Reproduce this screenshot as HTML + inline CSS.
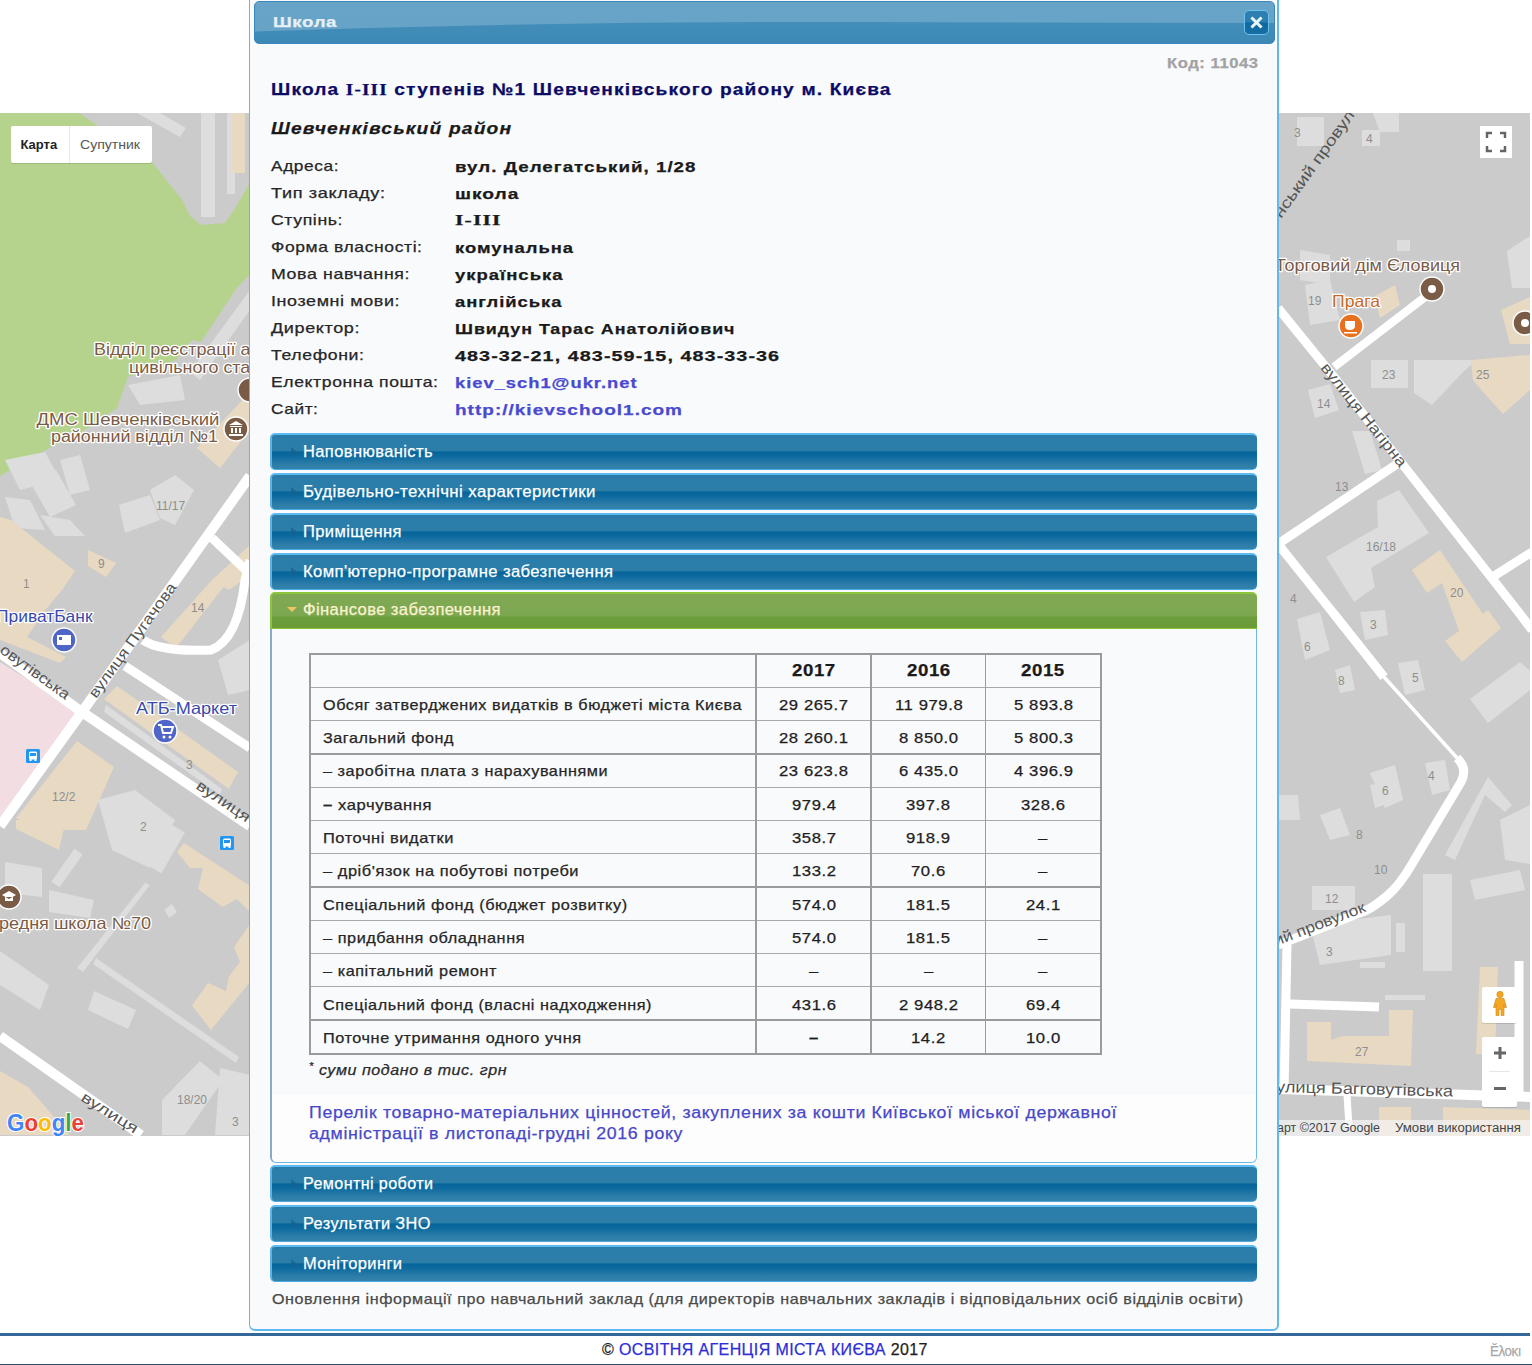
<!DOCTYPE html>
<html><head><meta charset="utf-8">
<style>
*{box-sizing:border-box}
html,body{margin:0;padding:0}
body{width:1532px;height:1365px;position:relative;overflow:hidden;background:#fff;font-family:"Liberation Sans",sans-serif;color:#222}
#map{position:absolute;left:0;top:113px;width:1530px;height:1023px;background:#cbcbcb;overflow:hidden}
#map svg{position:absolute;left:0;top:0}
.t{position:absolute;white-space:nowrap;line-height:1;transform-origin:0 0;-webkit-text-stroke:0.25px currentColor}
.ln{position:absolute}
#dlg{position:absolute;left:249px;top:-6px;width:1030px;height:1337px;border:1px solid #60b8ee;border-right-width:2px;border-bottom-width:2px;border-radius:6px;background:#f9fafc}
#tbar{position:absolute;left:254px;top:1px;width:1021px;height:43px;border-radius:5px;border:1px solid #3a85bb;overflow:hidden;
 background:linear-gradient(180deg,#4792bd 0%,#3d89b5 100%)}
#tbar svg{position:absolute;left:0;top:0}
#close{position:absolute;left:1244px;top:10px;width:25px;height:25px;border-radius:5px;border:1px solid #6ec2ef;background:linear-gradient(180deg,#2d80b0 0%,#2b7eaf 48%,#0e69a0 52%,#176fa4 100%)}
#close svg{position:absolute;left:5px;top:5px}
.acc{position:absolute;left:270px;width:987px;height:37px;border-radius:5px;border-top:2px solid #5cbcf2;border-left:2px solid #5ab4ea;border-bottom:1px solid #4aa8e0;
 background:linear-gradient(180deg,#2a7aa8 0%,#2b7daa 10%,#2c7ea9 46%,#05659a 50%,#0d6a9f 62%,#2b7ca8 85%,#3383ad 100%)}
.acc i{position:absolute;left:19px;top:12px;width:0;height:0;border-top:5px solid transparent;border-bottom:5px solid transparent;border-left:6px solid #1b5f8c;opacity:.7}
#accg{position:absolute;left:270px;top:592px;width:987px;height:37px;border-radius:5px 5px 0 0;border-top:2px solid #8cc63a;border-left:2px solid #8cc43e;border-bottom:1px solid #8cc43a;
 background:linear-gradient(180deg,#80a954 0%,#7da751 62%,#6c9e3b 70%,#6a9b38 100%)}
#accg i{position:absolute;left:15px;top:13px;width:0;height:0;border-left:5px solid transparent;border-right:5px solid transparent;border-top:5px solid #f0c462}
#panel{position:absolute;left:270px;top:629px;width:987px;height:534px;border:1px solid #6cb9ea;border-left:2px solid #8aaacb;border-top:none;border-radius:0 0 6px 6px;background:#f9fafc}
</style></head><body>
<div id="map">
<svg width="1530" height="1023" viewBox="0 113 1530 1023" font-family="Liberation Sans, sans-serif">
<defs>
<style>
.g{fill:#b5d38d}.lb{fill:#dddddd}.tn{fill:#e8d9c3}.pk{fill:#f2dde3}
.rd{stroke:#fff;fill:none;stroke-linecap:butt;stroke-linejoin:round}
.br{fill:#7a5b45;stroke:#fff;stroke-width:2.5px;paint-order:stroke;stroke-linejoin:round}
.bl{fill:#3949ab;stroke:#fff;stroke-width:2.5px;paint-order:stroke;stroke-linejoin:round}
.st{fill:#555;stroke:#fff;stroke-width:0px}
.nm{fill:#8e8e8e;font-size:12px}
</style>
</defs>
<rect x="0" y="113" width="1530" height="1023" fill="#cbcbcb"/>
<!-- ===== LEFT MAP ===== -->
<!-- green park -->
<polygon class="g" points="0,113 79,113 152,162 183,201 190,216 201,225 225,223 234,210 250,183 250,274 236,289 201,342 192,340 176,360 128,377 117,408 88,428 46,450 0,476"/>
<!-- top-right gray area details -->
<polygon class="lb" points="137,113 160,113 186,128 180,137"/>
<rect class="lb" x="201" y="113" width="14" height="104"/>
<rect class="lb" x="227" y="113" width="8" height="81"/>
<rect class="tn" x="232" y="113" width="13" height="60"/>
<!-- light gray blobs near labels -->
<polygon class="lb" points="250,290 250,310 200,380 190,372"/>
<polygon class="lb" points="128,385 180,375 185,400 140,405"/>
<polygon class="lb" points="5,460 45,452 60,480 20,490"/>
<polygon class="lb" points="30,482 56,470 76,505 50,517"/>
<polygon class="lb" points="60,460 80,455 90,490 70,495"/>
<polygon class="lb" points="5,497 30,500 45,530 15,528"/>
<polygon class="lb" points="40,515 70,520 85,536 55,536"/>
<polygon class="lb" points="119,505 150,495 160,520 125,533"/>
<polygon class="lb" points="150,490 175,475 194,490 175,525 160,518"/>
<!-- tan buildings -->
<polygon class="tn" points="197,448 250,392 250,430 220,468"/>
<polygon class="tn" points="0,517 11,520 75,571 62,590 46,609 27,637 66,657 60,663 0,640"/>
<polygon class="tn" points="0,580 68,580 46,609 0,590"/>
<polygon class="tn" points="88,550 116,563 106,577 88,566"/>
<polygon class="tn" points="161,637 176,648 229,580 212,580"/>
<polygon class="tn" points="212,580 250,545 250,575 229,590"/>
<!-- pink -->
<polygon class="pk" points="0,662 80,712 0,822"/>
<!-- ATB -->
<polygon class="tn" points="104,699 117,686 238,772 229,789"/>
<polygon class="lb" points="106,705 222,789 220,795 104,712"/>
<polygon class="lb" points="218,660 250,640 250,690 228,695"/>
<polygon class="tn" points="16,818 77,741 114,767 86,830 40,830"/>
<polygon class="lb" points="98,800 135,790 175,820 150,868 112,850"/>
<polygon class="tn" points="177,852 184,843 250,886 250,912 237,899 222.6,907 198,889 203,868 190,868"/><polygon class="tn" points="234,947 250,924 250,982 211,1030 192,1005.5 208,983 226,991 229,976.5 240,962"/><polygon class="lb" points="164.5,910 172,904 177,912 169,918"/>
<polygon class="tn" points="16,820 66,820 59,850 16,829"/>
<rect class="lb" x="138" y="820" width="38" height="47" transform="rotate(30 157 843)"/>
<polygon class="lb" points="5,862 42,868 42,897 5,893"/>
<polygon class="lb" points="49,890 94,900 90,918 49,912"/>
<polygon class="lb" points="0,951 49,985 40,1010 0,985"/>
<polygon class="lb" points="94,991 136,1010 128,1029 88,1010"/>
<polygon class="lb" points="162,1100 200,1061 223,1080 185,1135 162,1135"/>
<polygon class="lb" points="220,1068 250,1075 250,1135 215,1135"/>
<polygon class="lb" points="77,968 83,972 150,885 145,883"/>
<rect class="lb" x="62" y="848" width="10" height="40" transform="rotate(35 67 868)"/>
<polygon class="lb" points="96,958 239,1057 236,1063 93,964"/>
<polygon class="tn" points="0,1071 28,1087 70,1135 0,1135"/>
<!-- roads -->
<polyline class="rd" stroke-width="10" points="250,476 176,580 82,712 0,826"/>
<polyline class="rd" stroke-width="9" points="212,538 250,574"/>
<path class="rd" stroke-width="9" d="M143,640 Q160,652 211,650 Q238,640 245,580 L250,560"/>
<polyline class="rd" stroke-width="10" points="0,653 82,712 250,826"/>
<polyline class="rd" stroke-width="9" points="125,666 250,748"/>
<polyline class="rd" stroke-width="10" points="0,1036 141,1135"/>
<!-- left labels -->
<text class="br" font-size="16" transform="translate(94,355) scale(1.12,1)">Відділ реєстрації актів</text>
<text class="br" font-size="16" transform="translate(129,373) scale(1.12,1)">цивільного стану</text>
<text class="br" x="36.5" y="425" font-size="16" textLength="183" lengthAdjust="spacingAndGlyphs">ДМС Шевченківський</text>
<text class="br" x="51" y="442" font-size="16" textLength="167" lengthAdjust="spacingAndGlyphs">районний відділ №1</text>
<circle cx="236" cy="429" r="12" fill="#7a5b45" stroke="#fff" stroke-width="1.5"/>
<path d="M229,425 L236,421 L243,425 Z M230,426h12v1h-12z M231,428h2v5h-2z M235,428h2v5h-2z M239,428h2v5h-2z M229,434h14v2h-14z" fill="#fff"/>
<circle cx="250" cy="390" r="12" fill="#7a5b45" stroke="#fff" stroke-width="1.5"/>
<text class="nm" x="156" y="510">11/17</text>
<text class="nm" x="98" y="568">9</text>
<text class="nm" x="23" y="588">1</text>
<text class="nm" x="191" y="612">14</text>
<text class="nm" x="186" y="769">3</text>
<text class="nm" x="52" y="801">12/2</text>
<text class="nm" x="140" y="831">2</text>
<text class="nm" x="177" y="1104">18/20</text>
<text class="nm" x="232" y="1126">3</text>
<text class="bl" x="-4" y="622" font-size="16.5" textLength="96.5" lengthAdjust="spacingAndGlyphs">ПриватБанк</text>
<circle cx="64" cy="640" r="12" fill="#5065c8" stroke="#fff" stroke-width="1.5"/>
<rect x="57" y="635" width="14" height="10" fill="#fff"/><rect x="59" y="637" width="3" height="3" fill="#5065c8"/>
<text class="bl" x="136" y="714" font-size="16.5" textLength="101" lengthAdjust="spacingAndGlyphs">АТБ-Маркет</text>
<circle cx="165" cy="731" r="12" fill="#5065c8" stroke="#fff" stroke-width="1.5"/>
<path d="M158,725h3l2,8h8l2,-6h-11" stroke="#fff" stroke-width="2" fill="none"/><circle cx="164" cy="737" r="1.5" fill="#fff"/><circle cx="170" cy="737" r="1.5" fill="#fff"/>
<rect x="26" y="749" width="14" height="14" rx="1.5" fill="#2196f3"/><rect x="29" y="751.5" width="8" height="8" rx="1.5" fill="#fff"/><rect x="30" y="753" width="6" height="3" fill="#2196f3"/><rect x="29.5" y="759" width="2" height="2" fill="#fff"/><rect x="34.5" y="759" width="2" height="2" fill="#fff"/>
<rect x="220" y="836" width="14" height="14" rx="1.5" fill="#2196f3"/><rect x="223" y="838.5" width="8" height="8" rx="1.5" fill="#fff"/><rect x="224" y="840" width="6" height="3" fill="#2196f3"/><rect x="223.5" y="846" width="2" height="2" fill="#fff"/><rect x="228.5" y="846" width="2" height="2" fill="#fff"/>
<text fill="#555" font-size="15" textLength="138" lengthAdjust="spacingAndGlyphs" transform="translate(96,699) rotate(-54)">вулиця Пугачова</text>
<text fill="#555" font-size="15" textLength="82" lengthAdjust="spacingAndGlyphs" transform="translate(-1,652) rotate(36)">овутівська</text>
<text fill="#555" font-size="15" textLength="62" lengthAdjust="spacingAndGlyphs" transform="translate(195,788) rotate(34)">вулиця</text>
<text fill="#555" font-size="15" textLength="64" lengthAdjust="spacingAndGlyphs" transform="translate(80,1100) rotate(32)">вулиця</text>
<circle cx="9" cy="897" r="12" fill="#7a5b45" stroke="#fff" stroke-width="1.5"/>
<path d="M2,895 L9,891 L16,895 L9,899Z M5,897v4h8v-4" fill="#fff"/>
<text class="br" x="-1" y="929" font-size="16.5" textLength="152" lengthAdjust="spacingAndGlyphs">редня школа №70</text>
<!-- Google logo -->
<g font-size="23" font-weight="bold" stroke="#fff" stroke-width="2" paint-order="stroke">
<text x="7" y="1131" fill="#4285f4" textLength="77" lengthAdjust="spacingAndGlyphs">G<tspan fill="#ea4335">o</tspan><tspan fill="#fbbc05">o</tspan><tspan fill="#4285f4">g</tspan><tspan fill="#34a853">l</tspan><tspan fill="#ea4335">e</tspan></text>
</g>
<!-- map type control -->
<rect x="11" y="127" width="141" height="37" fill="rgba(0,0,0,0.12)" rx="2"/>
<rect x="11" y="126" width="141" height="37" fill="#fff" rx="2"/>
<line x1="69.5" y1="126" x2="69.5" y2="163" stroke="#e6e6e6"/>
<text x="20.5" y="149" font-size="13" font-weight="bold" fill="#222">Карта</text>
<text x="80" y="149" font-size="13" fill="#565656" textLength="60" lengthAdjust="spacingAndGlyphs">Супутник</text>

<!-- ===== RIGHT MAP ===== -->
<polygon class="lb" points="1297,117 1324,117 1324,146 1297,146"/>
<polygon class="lb" points="1362,130 1380,130 1380,146 1362,146"/>
<polygon class="lb" points="1373,113 1399,113 1399,132 1380,132"/>
<polygon class="lb" points="1397,240 1410,240 1410,251 1397,251"/>
<polygon class="lb" points="1507,251 1530,236 1530,288 1512,288"/>
<polygon class="lb" points="1300,250 1330,255 1330,285 1300,280"/>
<polygon class="lb" points="1305,285 1330,280 1340,320 1310,325"/>
<polygon class="tn" points="1375,296 1395,285 1400,305 1380,318"/>
<polygon class="tn" points="1501,310 1530,297 1530,344 1510,344"/>
<!-- Нагірна area -->
<polygon class="lb" points="1371,360 1408,360 1408,388 1371,388"/>
<polygon class="lb" points="1414,360 1477,360 1464,371 1432,405 1414,393"/>
<polygon class="tn" points="1471,360 1530,355 1530,390 1503,414 1483,392 1473,380"/>
<polygon class="lb" points="1308,390 1330,384 1339,410 1315,418"/>
<polygon class="lb" points="1352,431 1370,431 1382,470 1365,474"/>
<polygon class="lb" points="1326,557 1378,527 1377,501 1399,490 1429,533 1371,568 1375,587 1354,602"/>
<polygon class="tn" points="1412,570 1440,550 1483,614 1453,614 1442,583 1427,593"/><polygon class="tn" points="1453,614 1483,614 1490,625 1462,640"/>
<polygon class="tn" points="1445,641 1488,610 1501,628 1462,662"/>
<polygon class="lb" points="1470,699 1520,662 1530,671 1530,690 1488,723"/>
<polygon class="lb" points="1297,619 1320,612 1330,650 1305,660"/>
<polygon class="lb" points="1360,612 1385,610 1388,635 1365,640"/>
<polygon class="lb" points="1398,663 1418,660 1425,690 1405,695"/>
<polygon class="lb" points="1335,670 1350,665 1355,690 1340,693"/>
<polygon class="lb" points="1370,773 1395,765 1403,800 1385,808"/>
<polygon class="lb" points="1425,763 1445,760 1450,790 1432,795"/>
<polygon class="lb" points="1370,785 1390,780 1398,800 1375,808"/>
<polygon class="lb" points="1320,815 1340,808 1350,835 1330,840"/>
<polygon class="lb" points="1278,795 1298,795 1300,820 1278,820"/>
<polygon class="lb" points="1445,855 1488,777 1512,805 1505,812 1485,795 1455,860"/>
<polygon class="lb" points="1500,820 1530,805 1530,864 1505,860"/>
<polygon class="lb" points="1423,874 1452,874 1452,971 1423,971"/>
<polygon class="lb" points="1312,886 1355,886 1355,910 1312,910"/>
<polygon class="lb" points="1310,925 1391,915 1391,955 1320,965"/>
<polygon class="lb" points="1396,923 1405,923 1405,952 1396,952"/>
<polygon class="lb" points="1360,962 1385,962 1385,968 1360,968"/>
<polygon class="lb" points="1385,995 1425,995 1425,1000 1385,1000"/>
<polygon class="lb" points="1470,880 1520,870 1525,890 1475,900"/>
<polygon class="tn" points="1307,1022 1331,1022 1331,1040 1343,1036 1389,1036 1389,1010 1413,1010 1411,1066 1307,1061"/>
<polygon class="tn" points="1480,967 1498,967 1495,1054 1476,1054"/>
<polygon class="tn" points="1379,1107 1411,1107 1411,1136 1379,1136"/>
<polygon class="tn" points="1443,1107 1530,1110 1530,1136 1443,1136"/>
<!-- right roads -->
<polyline class="rd" stroke-width="9" points="1278,308 1334,377 1520,614 1532,630"/>
<polyline class="rd" stroke-width="8.5" points="1425,297 1334,367"/>
<polyline class="rd" stroke-width="9" points="1278,544 1397,464"/>
<polyline class="rd" stroke-width="9" points="1278,544 1334,614 1384,677"/>
<polyline class="rd" stroke-width="9" points="1494,576 1532,552"/>


<path class="rd" stroke-width="9" d="M1334,614 L1384,677"/><path class="rd" stroke-width="3.5" d="M1384,677 L1458,759"/><path class="rd" stroke-width="9" d="M1457,758 Q1468,768 1461,782 L1412,864 Q1400,885 1387,896 Q1375,906 1367,910 L1278,945"/>
<polyline class="rd" stroke-width="9" points="1287,945 1284,1093"/>
<polyline class="rd" stroke-width="9" points="1290,1004 1379,1007"/>
<polyline class="rd" stroke-width="10" points="1278,1089 1532,1097"/>
<polyline class="rd" stroke-width="9" points="1519,961 1519,1093"/>
<polyline class="rd" stroke-width="7" points="1347,1095 1349,1127"/>
<!-- right labels -->
<text fill="#555" font-size="15.5" textLength="128" lengthAdjust="spacingAndGlyphs" transform="translate(1281,219) rotate(-54.5)">нський провул</text>
<text class="br" x="1275" y="271" font-size="16.5" textLength="185" lengthAdjust="spacingAndGlyphs">Торговий дім Єловиця</text>
<circle cx="1432" cy="289" r="12" fill="#7a5b45" stroke="#fff" stroke-width="1.5"/><circle cx="1432" cy="289" r="4" fill="#fff"/>
<circle cx="1525" cy="323" r="12" fill="#7a5b45" stroke="#fff" stroke-width="1.5"/><circle cx="1525" cy="323" r="4" fill="#fff"/>
<text x="1332" y="307" font-size="16.5" textLength="48" lengthAdjust="spacingAndGlyphs" fill="#c26a25" stroke="#fff" stroke-width="2.5" paint-order="stroke">Прага</text>
<circle cx="1351" cy="326" r="12" fill="#e8711f" stroke="#fff" stroke-width="1.5"/>
<path d="M1345,321h10v5q0,4 -5,4q-5,0 -5,-4z M1344,332h13v1.5h-13z" fill="#fff"/>
<text class="nm" x="1308" y="305">19</text>
<text class="nm" x="1294" y="137">3</text>
<text class="nm" x="1366" y="143">4</text>
<text class="nm" x="1382" y="379">23</text>
<text class="nm" x="1476" y="379">25</text>
<text class="nm" x="1317" y="408">14</text>
<text class="nm" x="1335" y="491">13</text>
<text class="nm" x="1366" y="551">16/18</text>
<text class="nm" x="1450" y="597">20</text>
<text class="nm" x="1290" y="603">4</text>
<text class="nm" x="1370" y="629">3</text>
<text class="nm" x="1304" y="651">6</text>
<text class="nm" x="1338" y="685">8</text>
<text class="nm" x="1412" y="682">5</text>
<text class="nm" x="1428" y="780">4</text>
<text class="nm" x="1382" y="795">6</text>
<text class="nm" x="1356" y="839">8</text>
<text class="nm" x="1374" y="874">10</text>
<text class="nm" x="1325" y="903">12</text>
<text class="nm" x="1326" y="956">3</text>
<text class="nm" x="1355" y="1056">27</text>
<text fill="#555" font-size="15.5" textLength="128" lengthAdjust="spacingAndGlyphs" transform="translate(1320,368) rotate(51.5)">вулиця Нагірна</text>
<text fill="#555" font-size="15.5" textLength="97" lengthAdjust="spacingAndGlyphs" transform="translate(1276,946) rotate(-21)">ий провулок</text>
<text fill="#555" font-size="16" textLength="177" lengthAdjust="spacingAndGlyphs" transform="translate(1276,1092) rotate(1.5)">улиця Багговутівська</text>
<!-- controls -->
<rect x="1480" y="126" width="32" height="32" fill="#fff"/>
<path d="M1487,138v-5h5 M1500,133h5v5 M1505,146v5h-5 M1492,151h-5v-5" stroke="#666" stroke-width="2.5" fill="none"/>
<rect x="1482" y="988" width="35" height="36" fill="rgba(0,0,0,.12)" rx="2"/>
<rect x="1482" y="987" width="35" height="36" fill="#fff" rx="2"/>
<circle cx="1500" cy="994.5" r="3.2" fill="#f5a623" stroke="#c98a10" stroke-width=".6"/>
<path d="M1496,998.5h8l2.5,9h-2l-0.5,-3v11h-3v-6h-2v6h-3v-11l-0.5,3h-2z" fill="#f5a623" stroke="#c98a10" stroke-width=".6"/>
<rect x="1482" y="1038" width="35" height="70" fill="rgba(0,0,0,.12)" rx="2"/>
<rect x="1482" y="1037" width="35" height="70" fill="#fff" rx="2"/>
<line x1="1489" y1="1071.5" x2="1510" y2="1071.5" stroke="#e6e6e6"/>
<path d="M1494,1053h12 M1500,1047v12" stroke="#666" stroke-width="3"/>
<path d="M1494,1088.5h12" stroke="#666" stroke-width="3"/>
<rect x="1278" y="1120" width="252" height="16" fill="rgba(245,245,245,0.7)"/>
<text x="1277" y="1132" font-size="12.5" fill="#444" textLength="103" lengthAdjust="spacingAndGlyphs">арт ©2017 Google</text>
<text x="1395" y="1132" font-size="12.5" fill="#444" textLength="126" lengthAdjust="spacingAndGlyphs">Умови використання</text>
</svg>

</div>
<div id="dlg"></div>
<div id="tbar"><svg width="1021" height="43"><defs><linearGradient id="tg" x1="0" y1="0" x2="0" y2="1"><stop offset="0" stop-color="#68a4c8"/><stop offset="1" stop-color="#67a3c6"/></linearGradient></defs><path d="M0,0H1021V21L600,20Q300,19 0,29.5Z" fill="url(#tg)"/></svg></div>
<div id="close"><svg width="13" height="13" viewBox="0 0 13 13"><path d="M2.5 2.5L10.5 10.5M10.5 2.5L2.5 10.5" stroke="#e8f6fc" stroke-width="3" stroke-linecap="square"/></svg></div>
<div class="acc" style="top:433px"><i></i></div>
<div class="acc" style="top:473px"><i></i></div>
<div class="acc" style="top:513px"><i></i></div>
<div class="acc" style="top:553px"><i></i></div>
<div id="accg"><i></i></div>
<div id="panel"></div>
<div class="ln" style="left:272px;top:1095px;width:984px;height:67px;background:#fdfdfe;border-radius:0 0 5px 5px"></div>
<div class="ln" style="left:309px;top:687px;width:792px;height:1px;background:#a9a9a9"></div>
<div class="ln" style="left:309px;top:720px;width:792px;height:1px;background:#a9a9a9"></div>
<div class="ln" style="left:309px;top:753px;width:792px;height:2px;background:#9a9a9a"></div>
<div class="ln" style="left:309px;top:787px;width:792px;height:1px;background:#a9a9a9"></div>
<div class="ln" style="left:309px;top:820px;width:792px;height:1px;background:#a9a9a9"></div>
<div class="ln" style="left:309px;top:853px;width:792px;height:1px;background:#a9a9a9"></div>
<div class="ln" style="left:309px;top:886px;width:792px;height:2px;background:#9a9a9a"></div>
<div class="ln" style="left:309px;top:920px;width:792px;height:1px;background:#a9a9a9"></div>
<div class="ln" style="left:309px;top:953px;width:792px;height:1px;background:#a9a9a9"></div>
<div class="ln" style="left:309px;top:986px;width:792px;height:1px;background:#a9a9a9"></div>
<div class="ln" style="left:309px;top:1019px;width:792px;height:2px;background:#9a9a9a"></div>
<div class="ln" style="left:309px;top:653px;width:2px;height:401px;background:#9c9c9c"></div>
<div class="ln" style="left:755px;top:653px;width:2px;height:401px;background:#9c9c9c"></div>
<div class="ln" style="left:870px;top:653px;width:2px;height:401px;background:#9c9c9c"></div>
<div class="ln" style="left:985px;top:653px;width:1px;height:401px;background:#9c9c9c"></div>
<div class="ln" style="left:1100px;top:653px;width:2px;height:401px;background:#9c9c9c"></div>
<div class="ln" style="left:309px;top:653px;width:793px;height:2px;background:#9a9a9a"></div>
<div class="ln" style="left:309px;top:1053px;width:793px;height:2px;background:#9a9a9a"></div>
<div class="acc" style="top:1165px"><i></i></div>
<div class="acc" style="top:1205px"><i></i></div>
<div class="acc" style="top:1245px"><i></i></div>
<div class="ln" style="left:0;top:1333px;width:1530px;height:3px;background:#35689a"></div>
<div class="t" style="left:1490px;top:1344px;font-size:14px;color:#a8a8a8;letter-spacing:-0.5px;transform:scaleX(0.95)">Ĕλoĸı</div>
<div class="ln" style="left:0;top:1364px;width:1532px;height:1px;background:#2f4f6f"></div>
<div class="t" style="left:272.5px;top:13.8px;color:#e6f0f6;font-size:15px;font-weight:bold;font-style:normal;letter-spacing:0.5px;transform:scaleX(1.2440)">Школа</div>
<div class="t" style="left:1167.3px;top:55.3px;color:#a2a2a2;font-size:15px;font-weight:bold;font-style:normal;letter-spacing:0.5px;transform:scaleX(1.1070)">Код: 11043</div>
<div class="t" style="left:271.0px;top:80.8px;color:#0b0b66;font-size:16.5px;font-weight:bold;font-style:normal;letter-spacing:1.0px;transform:scaleX(1.1599)">Школа <span style="font-family:Liberation Serif">I-III</span> ступенів №1 Шевченківського району м. Києва</div>
<div class="t" style="left:271.0px;top:120.2px;color:#1a1a1a;font-size:17px;font-weight:bold;font-style:italic;letter-spacing:1.0px;transform:scaleX(1.1332)">Шевченківський район</div>
<div class="t" style="left:270.9px;top:159.3px;color:#262626;font-size:14.5px;font-weight:normal;font-style:normal;letter-spacing:0.5px;transform:scaleX(1.1924)">Адреса:</div>
<div class="t" style="left:454.6px;top:158.9px;color:#1a1a1a;font-size:15px;font-weight:bold;font-style:normal;letter-spacing:0.8px;transform:scaleX(1.2518)">вул. Делегатський, 1/28</div>
<div class="t" style="left:270.9px;top:186.3px;color:#262626;font-size:14.5px;font-weight:normal;font-style:normal;letter-spacing:0.5px;transform:scaleX(1.2502)">Тип закладу:</div>
<div class="t" style="left:454.6px;top:185.9px;color:#1a1a1a;font-size:15px;font-weight:bold;font-style:normal;letter-spacing:0.8px;transform:scaleX(1.2781)">школа</div>
<div class="t" style="left:270.9px;top:213.3px;color:#262626;font-size:14.5px;font-weight:normal;font-style:normal;letter-spacing:0.5px;transform:scaleX(1.2180)">Ступінь:</div>
<div class="t" style="left:454.6px;top:212.9px;color:#1a1a1a;font-family:Liberation Serif,serif;font-size:15px;font-weight:bold;font-style:normal;letter-spacing:0.8px;transform:scaleX(1.4417)">I-III</div>
<div class="t" style="left:270.9px;top:240.3px;color:#262626;font-size:14.5px;font-weight:normal;font-style:normal;letter-spacing:0.5px;transform:scaleX(1.2072)">Форма власності:</div>
<div class="t" style="left:454.6px;top:239.9px;color:#1a1a1a;font-size:15px;font-weight:bold;font-style:normal;letter-spacing:0.8px;transform:scaleX(1.2256)">комунальна</div>
<div class="t" style="left:270.9px;top:267.3px;color:#262626;font-size:14.5px;font-weight:normal;font-style:normal;letter-spacing:0.5px;transform:scaleX(1.2248)">Мова навчання:</div>
<div class="t" style="left:454.6px;top:266.9px;color:#1a1a1a;font-size:15px;font-weight:bold;font-style:normal;letter-spacing:0.8px;transform:scaleX(1.2321)">українська</div>
<div class="t" style="left:270.9px;top:294.3px;color:#262626;font-size:14.5px;font-weight:normal;font-style:normal;letter-spacing:0.5px;transform:scaleX(1.2346)">Іноземні мови:</div>
<div class="t" style="left:454.6px;top:293.9px;color:#1a1a1a;font-size:15px;font-weight:bold;font-style:normal;letter-spacing:0.8px;transform:scaleX(1.2268)">англійська</div>
<div class="t" style="left:270.9px;top:321.3px;color:#262626;font-size:14.5px;font-weight:normal;font-style:normal;letter-spacing:0.5px;transform:scaleX(1.2429)">Директор:</div>
<div class="t" style="left:454.6px;top:320.9px;color:#1a1a1a;font-size:15px;font-weight:bold;font-style:normal;letter-spacing:0.8px;transform:scaleX(1.1917)">Швидун Тарас Анатолійович</div>
<div class="t" style="left:270.9px;top:348.3px;color:#262626;font-size:14.5px;font-weight:normal;font-style:normal;letter-spacing:0.5px;transform:scaleX(1.2192)">Телефони:</div>
<div class="t" style="left:454.6px;top:347.9px;color:#1a1a1a;font-size:15px;font-weight:bold;font-style:normal;letter-spacing:0.8px;transform:scaleX(1.3183)">483-32-21, 483-59-15, 483-33-36</div>
<div class="t" style="left:270.9px;top:375.3px;color:#262626;font-size:14.5px;font-weight:normal;font-style:normal;letter-spacing:0.5px;transform:scaleX(1.2128)">Електронна пошта:</div>
<div class="t" style="left:454.6px;top:374.9px;color:#4a4ad0;font-size:15px;font-weight:bold;font-style:normal;letter-spacing:0.8px;transform:scaleX(1.2235)">kiev_sch1@ukr.net</div>
<div class="t" style="left:270.9px;top:402.3px;color:#262626;font-size:14.5px;font-weight:normal;font-style:normal;letter-spacing:0.5px;transform:scaleX(1.1883)">Сайт:</div>
<div class="t" style="left:454.6px;top:401.9px;color:#4a4ad0;font-size:15px;font-weight:bold;font-style:normal;letter-spacing:0.8px;transform:scaleX(1.2657)">http://kievschool1.com</div>
<div class="t" style="left:302.5px;top:444.1px;color:#ffffff;font-size:16px;font-weight:normal;font-style:normal;letter-spacing:0.4px;transform:scaleX(1.0291)">Наповнюваність</div>
<div class="t" style="left:302.5px;top:484.1px;color:#ffffff;font-size:16px;font-weight:normal;font-style:normal;letter-spacing:0.4px;transform:scaleX(1.0515)">Будівельно-технічні характеристики</div>
<div class="t" style="left:302.5px;top:524.1px;color:#ffffff;font-size:16px;font-weight:normal;font-style:normal;letter-spacing:0.4px;transform:scaleX(1.0292)">Приміщення</div>
<div class="t" style="left:302.5px;top:564.1px;color:#ffffff;font-size:16px;font-weight:normal;font-style:normal;letter-spacing:0.4px;transform:scaleX(1.0376)">Комп'ютерно-програмне забезпечення</div>
<div class="t" style="left:302.5px;top:602.3px;color:#fbf3d0;font-size:16px;font-weight:normal;font-style:normal;letter-spacing:0.4px;transform:scaleX(1.0332)">Фінансове забезпечення</div>
<div class="t" style="left:302.5px;top:1176.1px;color:#ffffff;font-size:16px;font-weight:normal;font-style:normal;letter-spacing:0.4px;transform:scaleX(1.0066)">Ремонтні роботи</div>
<div class="t" style="left:302.5px;top:1216.1px;color:#ffffff;font-size:16px;font-weight:normal;font-style:normal;letter-spacing:0.4px;transform:scaleX(1.0198)">Результати ЗНО</div>
<div class="t" style="left:302.5px;top:1256.1px;color:#ffffff;font-size:16px;font-weight:normal;font-style:normal;letter-spacing:0.4px;transform:scaleX(1.0280)">Моніторинги</div>
<div class="t" style="left:791.9px;top:662.5px;color:#1a1a1a;font-size:16px;font-weight:bold;font-style:normal;letter-spacing:0.5px;transform:scaleX(1.1646)">2017</div>
<div class="t" style="left:906.7px;top:662.5px;color:#1a1a1a;font-size:16px;font-weight:bold;font-style:normal;letter-spacing:0.5px;transform:scaleX(1.1646)">2016</div>
<div class="t" style="left:1021.4px;top:662.5px;color:#1a1a1a;font-size:16px;font-weight:bold;font-style:normal;letter-spacing:0.5px;transform:scaleX(1.1646)">2015</div>
<div class="t" style="left:323.2px;top:697.5px;color:#262626;font-size:14.5px;font-weight:normal;font-style:normal;letter-spacing:0.5px;transform:scaleX(1.1173)">Обсяг затверджених видатків в бюджеті міста Києва</div>
<div class="t" style="left:779.0px;top:697.5px;color:#1e1e1e;font-size:14.5px;font-weight:normal;font-style:normal;letter-spacing:0.5px;transform:scaleX(1.1497)">29 265.7</div>
<div class="t" style="left:894.5px;top:697.5px;color:#1e1e1e;font-size:14.5px;font-weight:normal;font-style:normal;letter-spacing:0.5px;transform:scaleX(1.1497)">11 979.8</div>
<div class="t" style="left:1013.5px;top:697.5px;color:#1e1e1e;font-size:14.5px;font-weight:normal;font-style:normal;letter-spacing:0.5px;transform:scaleX(1.1497)">5 893.8</div>
<div class="t" style="left:323.2px;top:730.9px;color:#262626;font-size:14.5px;font-weight:normal;font-style:normal;letter-spacing:0.5px;transform:scaleX(1.1146)">Загальний фонд</div>
<div class="t" style="left:779.0px;top:730.9px;color:#1e1e1e;font-size:14.5px;font-weight:normal;font-style:normal;letter-spacing:0.5px;transform:scaleX(1.1497)">28 260.1</div>
<div class="t" style="left:898.8px;top:730.9px;color:#1e1e1e;font-size:14.5px;font-weight:normal;font-style:normal;letter-spacing:0.5px;transform:scaleX(1.1497)">8 850.0</div>
<div class="t" style="left:1013.5px;top:730.9px;color:#1e1e1e;font-size:14.5px;font-weight:normal;font-style:normal;letter-spacing:0.5px;transform:scaleX(1.1497)">5 800.3</div>
<div class="t" style="left:323.2px;top:764.2px;color:#262626;font-size:14.5px;font-weight:normal;font-style:normal;letter-spacing:0.5px;transform:scaleX(1.1168)">– заробітна плата з нарахуваннями</div>
<div class="t" style="left:779.0px;top:764.2px;color:#1e1e1e;font-size:14.5px;font-weight:normal;font-style:normal;letter-spacing:0.5px;transform:scaleX(1.1497)">23 623.8</div>
<div class="t" style="left:898.8px;top:764.2px;color:#1e1e1e;font-size:14.5px;font-weight:normal;font-style:normal;letter-spacing:0.5px;transform:scaleX(1.1497)">6 435.0</div>
<div class="t" style="left:1013.5px;top:764.2px;color:#1e1e1e;font-size:14.5px;font-weight:normal;font-style:normal;letter-spacing:0.5px;transform:scaleX(1.1497)">4 396.9</div>
<div class="t" style="left:323.2px;top:797.5px;color:#262626;font-size:14.5px;font-weight:normal;font-style:normal;letter-spacing:0.5px;transform:scaleX(1.1447)"><b>–</b> харчування</div>
<div class="t" style="left:791.5px;top:797.5px;color:#1e1e1e;font-size:14.5px;font-weight:normal;font-style:normal;letter-spacing:0.5px;transform:scaleX(1.1497)">979.4</div>
<div class="t" style="left:906.3px;top:797.5px;color:#1e1e1e;font-size:14.5px;font-weight:normal;font-style:normal;letter-spacing:0.5px;transform:scaleX(1.1497)">397.8</div>
<div class="t" style="left:1021.0px;top:797.5px;color:#1e1e1e;font-size:14.5px;font-weight:normal;font-style:normal;letter-spacing:0.5px;transform:scaleX(1.1497)">328.6</div>
<div class="t" style="left:323.2px;top:830.8px;color:#262626;font-size:14.5px;font-weight:normal;font-style:normal;letter-spacing:0.5px;transform:scaleX(1.1319)">Поточні видатки</div>
<div class="t" style="left:791.5px;top:830.8px;color:#1e1e1e;font-size:14.5px;font-weight:normal;font-style:normal;letter-spacing:0.5px;transform:scaleX(1.1497)">358.7</div>
<div class="t" style="left:906.3px;top:830.8px;color:#1e1e1e;font-size:14.5px;font-weight:normal;font-style:normal;letter-spacing:0.5px;transform:scaleX(1.1497)">918.9</div>
<div class="t" style="left:1038.4px;top:830.8px;color:#1e1e1e;font-size:14.5px;font-weight:normal;font-style:normal;letter-spacing:0.5px;transform:scaleX(1.1497)">–</div>
<div class="t" style="left:323.2px;top:864.2px;color:#262626;font-size:14.5px;font-weight:normal;font-style:normal;letter-spacing:0.5px;transform:scaleX(1.1303)">– дріб'язок на побутові потреби</div>
<div class="t" style="left:791.5px;top:864.2px;color:#1e1e1e;font-size:14.5px;font-weight:normal;font-style:normal;letter-spacing:0.5px;transform:scaleX(1.1497)">133.2</div>
<div class="t" style="left:911.2px;top:864.2px;color:#1e1e1e;font-size:14.5px;font-weight:normal;font-style:normal;letter-spacing:0.5px;transform:scaleX(1.1497)">70.6</div>
<div class="t" style="left:1038.4px;top:864.2px;color:#1e1e1e;font-size:14.5px;font-weight:normal;font-style:normal;letter-spacing:0.5px;transform:scaleX(1.1497)">–</div>
<div class="t" style="left:323.2px;top:897.5px;color:#262626;font-size:14.5px;font-weight:normal;font-style:normal;letter-spacing:0.5px;transform:scaleX(1.1223)">Спеціальний фонд (бюджет розвитку)</div>
<div class="t" style="left:791.5px;top:897.5px;color:#1e1e1e;font-size:14.5px;font-weight:normal;font-style:normal;letter-spacing:0.5px;transform:scaleX(1.1497)">574.0</div>
<div class="t" style="left:906.3px;top:897.5px;color:#1e1e1e;font-size:14.5px;font-weight:normal;font-style:normal;letter-spacing:0.5px;transform:scaleX(1.1497)">181.5</div>
<div class="t" style="left:1025.9px;top:897.5px;color:#1e1e1e;font-size:14.5px;font-weight:normal;font-style:normal;letter-spacing:0.5px;transform:scaleX(1.1497)">24.1</div>
<div class="t" style="left:323.2px;top:930.8px;color:#262626;font-size:14.5px;font-weight:normal;font-style:normal;letter-spacing:0.5px;transform:scaleX(1.1216)">– придбання обладнання</div>
<div class="t" style="left:791.5px;top:930.8px;color:#1e1e1e;font-size:14.5px;font-weight:normal;font-style:normal;letter-spacing:0.5px;transform:scaleX(1.1497)">574.0</div>
<div class="t" style="left:906.3px;top:930.8px;color:#1e1e1e;font-size:14.5px;font-weight:normal;font-style:normal;letter-spacing:0.5px;transform:scaleX(1.1497)">181.5</div>
<div class="t" style="left:1038.4px;top:930.8px;color:#1e1e1e;font-size:14.5px;font-weight:normal;font-style:normal;letter-spacing:0.5px;transform:scaleX(1.1497)">–</div>
<div class="t" style="left:323.2px;top:964.2px;color:#262626;font-size:14.5px;font-weight:normal;font-style:normal;letter-spacing:0.5px;transform:scaleX(1.1194)">– капітальний ремонт</div>
<div class="t" style="left:808.9px;top:964.2px;color:#1e1e1e;font-size:14.5px;font-weight:normal;font-style:normal;letter-spacing:0.5px;transform:scaleX(1.1497)">–</div>
<div class="t" style="left:923.7px;top:964.2px;color:#1e1e1e;font-size:14.5px;font-weight:normal;font-style:normal;letter-spacing:0.5px;transform:scaleX(1.1497)">–</div>
<div class="t" style="left:1038.4px;top:964.2px;color:#1e1e1e;font-size:14.5px;font-weight:normal;font-style:normal;letter-spacing:0.5px;transform:scaleX(1.1497)">–</div>
<div class="t" style="left:323.2px;top:997.5px;color:#262626;font-size:14.5px;font-weight:normal;font-style:normal;letter-spacing:0.5px;transform:scaleX(1.1164)">Спеціальний фонд (власні надходження)</div>
<div class="t" style="left:791.5px;top:997.5px;color:#1e1e1e;font-size:14.5px;font-weight:normal;font-style:normal;letter-spacing:0.5px;transform:scaleX(1.1497)">431.6</div>
<div class="t" style="left:898.8px;top:997.5px;color:#1e1e1e;font-size:14.5px;font-weight:normal;font-style:normal;letter-spacing:0.5px;transform:scaleX(1.1497)">2 948.2</div>
<div class="t" style="left:1025.9px;top:997.5px;color:#1e1e1e;font-size:14.5px;font-weight:normal;font-style:normal;letter-spacing:0.5px;transform:scaleX(1.1497)">69.4</div>
<div class="t" style="left:323.2px;top:1030.8px;color:#262626;font-size:14.5px;font-weight:normal;font-style:normal;letter-spacing:0.5px;transform:scaleX(1.1215)">Поточне утримання одного учня</div>
<div class="t" style="left:808.9px;top:1030.8px;color:#1e1e1e;font-size:14.5px;font-weight:normal;font-style:normal;letter-spacing:0.5px;transform:scaleX(1.1497)"><b>–</b></div>
<div class="t" style="left:911.2px;top:1030.8px;color:#1e1e1e;font-size:14.5px;font-weight:normal;font-style:normal;letter-spacing:0.5px;transform:scaleX(1.1497)">14.2</div>
<div class="t" style="left:1025.9px;top:1030.8px;color:#1e1e1e;font-size:14.5px;font-weight:normal;font-style:normal;letter-spacing:0.5px;transform:scaleX(1.1497)">10.0</div>
<div class="t" style="left:309.4px;top:1062.7px;color:#2a2a2a;font-size:14.5px;font-weight:normal;font-style:italic;letter-spacing:0.5px;transform:scaleX(1.1080)"><span style="font-size:10px;position:relative;top:-5px">*</span> суми подано в тис. грн</div>
<div class="t" style="left:309.4px;top:1105.0px;color:#4848c8;font-size:16px;font-weight:normal;font-style:normal;letter-spacing:0.6px;transform:scaleX(1.1073)">Перелік товарно-матеріальних цінностей, закуплених за кошти Київської міської державної</div>
<div class="t" style="left:309.4px;top:1126.1px;color:#4848c8;font-size:16px;font-weight:normal;font-style:normal;letter-spacing:0.6px;transform:scaleX(1.1090)">адміністрації в листопаді-грудні 2016 року</div>
<div class="t" style="left:271.7px;top:1292.2px;color:#4a4a4a;font-size:14.5px;font-weight:normal;font-style:normal;letter-spacing:0.5px;transform:scaleX(1.1117)">Оновлення інформації про навчальний заклад (для директорів навчальних закладів і відповідальних осіб відділів освіти)</div>
<div class="t" style="left:602.0px;top:1341.0px;color:#1e1e1e;font-size:16.5px;font-weight:normal;font-style:normal;letter-spacing:0.4px;transform:scaleX(0.9692)">© <span style="color:#2d2dd8">ОСВІТНЯ АГЕНЦІЯ МІСТА КИЄВА</span> 2017</div>
</body></html>
